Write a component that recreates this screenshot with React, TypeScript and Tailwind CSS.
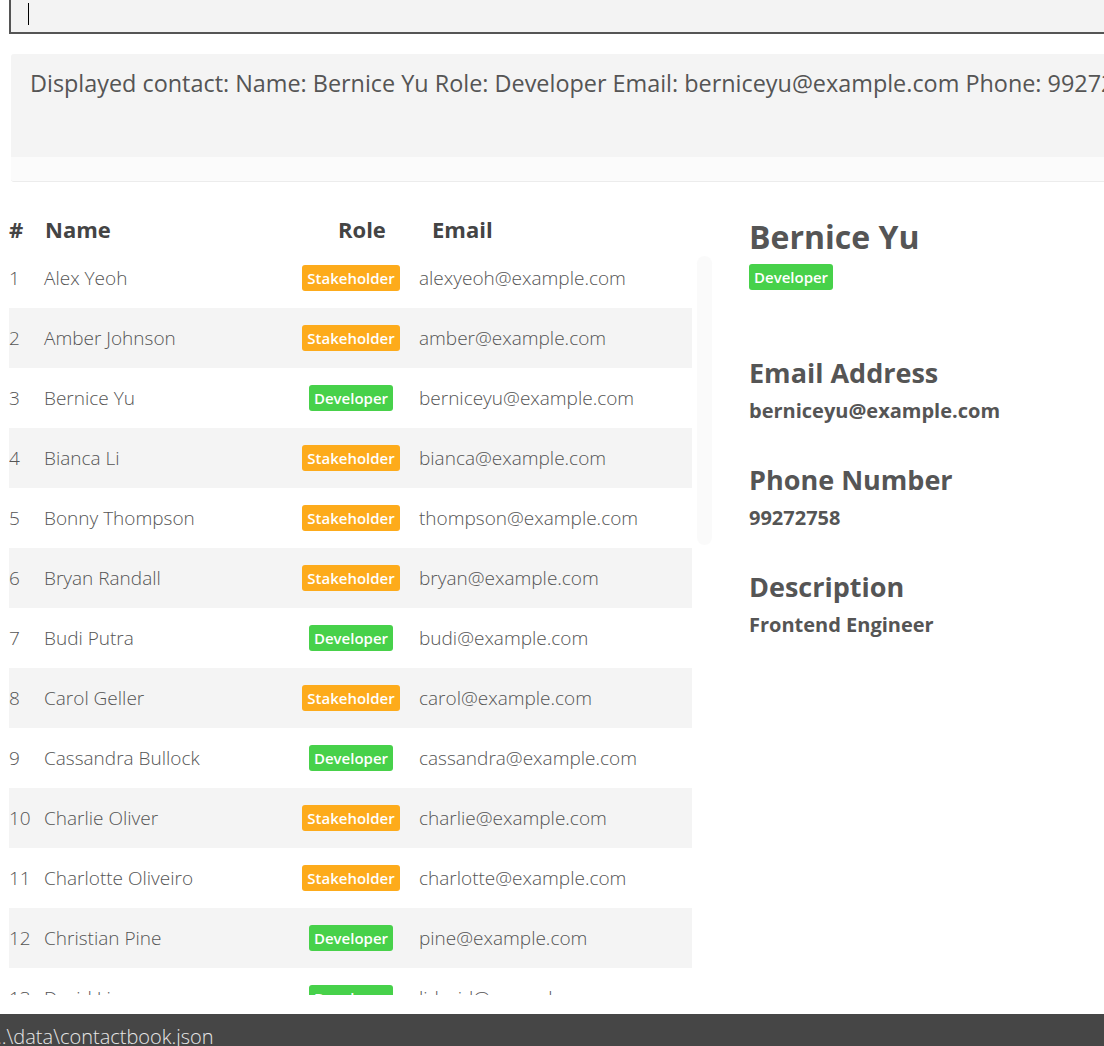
import React from "react";

type Contact = { name: string; role: "Stakeholder" | "Developer"; email: string };

const contacts: Contact[] = [
  { name: "Alex Yeoh", role: "Stakeholder", email: "alexyeoh@example.com" },
  { name: "Amber Johnson", role: "Stakeholder", email: "amber@example.com" },
  { name: "Bernice Yu", role: "Developer", email: "berniceyu@example.com" },
  { name: "Bianca Li", role: "Stakeholder", email: "bianca@example.com" },
  { name: "Bonny Thompson", role: "Stakeholder", email: "thompson@example.com" },
  { name: "Bryan Randall", role: "Stakeholder", email: "bryan@example.com" },
  { name: "Budi Putra", role: "Developer", email: "budi@example.com" },
  { name: "Carol Geller", role: "Stakeholder", email: "carol@example.com" },
  { name: "Cassandra Bullock", role: "Developer", email: "cassandra@example.com" },
  { name: "Charlie Oliver", role: "Stakeholder", email: "charlie@example.com" },
  { name: "Charlotte Oliveiro", role: "Stakeholder", email: "charlotte@example.com" },
  { name: "Christian Pine", role: "Developer", email: "pine@example.com" },
  { name: "David Li", role: "Developer", email: "lidavid@example.com" },
];

function RoleBadge({ role }: { role: Contact["role"] }) {
  return (
    <span
      className={
        role === "Developer"
          ? "inline-flex h-[26px] items-center rounded-[3px] bg-[#47d14a] px-[5px] text-[15px] font-semibold text-white"
          : "inline-flex h-[26px] items-center rounded-[3px] bg-[#fdab1b] px-[5px] text-[15px] font-semibold text-white"
      }
    >
      {role}
    </span>
  );
}

export default function App() {
  const selected = contacts[2];

  return (
    <div className="relative flex h-[1046px] w-[1104px] flex-col overflow-hidden bg-white font-['Open_Sans',sans-serif] text-[#555]">
      {/* command box */}
      <div className="-mt-[10px] ml-[9px] -mr-[20px] h-[44px] shrink-0 border-2 border-[#555] bg-[#f3f3f3] pl-[17px] pt-[11px]">
        <div className="h-[22px] w-px bg-black" />
      </div>

      {/* result display */}
      <div className="ml-[11px] -mr-[20px] mt-[20px] h-[128px] shrink-0 overflow-hidden rounded-[3px] border-b border-[#ececec] bg-[#fbfbfb]">
        <div className="h-[103px] whitespace-nowrap bg-[#f4f4f4] pl-[19px] pt-[12px] text-[23.4px] font-normal text-[#555]">
          Displayed contact: Name: {selected.name} Role: {selected.role} Email: {selected.email} Phone: 99272758
        </div>
      </div>

      <div className="flex min-h-0 flex-1">
        {/* contact list */}
        <div className="ml-[9px] flex w-[703px] flex-col">
          <div className="mt-[29px] flex h-[37px] items-center text-[22px] font-bold text-[#444]">
            <span className="w-[36px]">#</span>
            <span className="w-[293px]">Name</span>
            <span className="w-[94px]">Role</span>
            <span>Email</span>
          </div>
          <div className="flex h-[747px]">
            <div className="w-[683px] overflow-hidden">
              {contacts.map((c, i) => (
                <div
                  key={c.email}
                  className={`flex h-[60px] items-center text-[19px] font-light text-[#555] ${i % 2 === 1 ? "bg-[#f4f4f4]" : "bg-white"}`}
                >
                  <span className="w-[35px]">{i + 1}</span>
                  <span className="w-[255px]">{c.name}</span>
                  <span className="flex w-[104px] justify-center">
                    <RoleBadge role={c.role} />
                  </span>
                  <span className="pl-[16px]">{c.email}</span>
                </div>
              ))}
            </div>
            <div className="ml-[5px] w-[15px]">
              <div className="mt-[8px] h-[289px] rounded-full bg-[#fafafa]" />
            </div>
          </div>
        </div>

        {/* detail panel */}
        <div className="ml-[37px] flex flex-col items-start text-[#555]">
          <h1 className="mt-[34px] text-[32px] font-bold leading-[42px]">{selected.name}</h1>
          <div className="mt-[6px]">
            <RoleBadge role={selected.role} />
          </div>
          <h2 className="mt-[65px] text-[27px] font-bold leading-[36px]">Email Address</h2>
          <p className="mt-[5px] text-[20px] font-bold leading-[30px]">{selected.email}</p>
          <h2 className="mt-[36px] text-[27px] font-bold leading-[36px]">Phone Number</h2>
          <p className="mt-[5px] text-[20px] font-bold leading-[30px]">99272758</p>
          <h2 className="mt-[36px] text-[27px] font-bold leading-[36px]">Description</h2>
          <p className="mt-[5px] text-[20px] font-bold leading-[30px]">Frontend Engineer</p>
        </div>
      </div>

      {/* status bar */}
      <div className="absolute left-0 right-0 top-[1014px] h-[40px] bg-[#464646] pt-[8px]">
        <span className="-ml-[3px] whitespace-nowrap text-[20px] font-light text-[#e6e6e6]">..\data\contactbook.json</span>
      </div>
    </div>
  );
}
